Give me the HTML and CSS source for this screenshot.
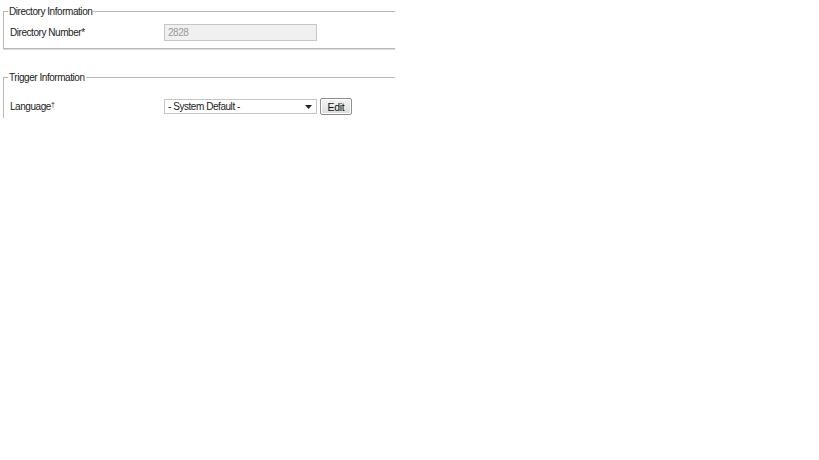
FILE: index.html
```html
<!DOCTYPE html>
<html>
<head>
<meta charset="utf-8">
<link rel="stylesheet" href="styles.css">
</head>
<body>
<div class="frame">
  <fieldset class="group group-dir">
    <legend>Directory Information</legend>
    <div class="row">
      <label class="lbl">Directory Number*</label>
      <input class="field field-disabled" type="text" value="2828" disabled>
    </div>
  </fieldset>
  <fieldset class="group group-trig">
    <legend>Trigger Information</legend>
    <div class="row">
      <label class="lbl">Language<sup class="mark">†</sup></label>
      <div class="select">
        <span class="select-text">- System Default -</span>
        <svg class="caret" width="7" height="4" viewBox="0 0 7 4"><path d="M0 0H7L3.5 4Z" fill="#222"/></svg>
      </div>
      <button class="btn" type="button">Edit</button>
    </div>
  </fieldset>
</div>
</body>
</html>
```
FILE: styles.css
```css
html, body {
  margin: 0;
  padding: 0;
  background: #fff;
}
body {
  font-family: "Liberation Sans", Arial, sans-serif;
  font-size: 10px;
  letter-spacing: -0.45px;
  color: #222;
}
.frame {
  width: 395px;
  height: 118px;
  overflow: hidden;
  padding-top: 5px;
  box-sizing: border-box;
}
.group {
  margin: 0 0 0 3px;
  width: 420px;
  padding: 0;
  border: 1px solid #b8b8b8;
  box-shadow: 0 1px 0 #dcdcdc;
}
.group legend {
  padding: 0 1px;
  margin-left: 4px;
  color: #222;
  font-size: 10px;
  line-height: 13px;
}
.group-dir {
  height: 44px;
  box-sizing: border-box;
}
.group-dir .row {
  margin-top: 6px;
}
.group-trig {
  margin-top: 22px;
  height: 80px;
}
.group-trig .row {
  margin-top: 14px;
}
.row {
  display: flex;
  align-items: center;
  height: 17px;
}
.lbl {
  width: 160px;
  padding-left: 6px;
  box-sizing: border-box;
}
.mark {
  font-size: 7px;
  vertical-align: top;
  line-height: 7px;
}
.field {
  width: 153px;
  height: 17px;
  box-sizing: border-box;
  margin: 0;
  padding: 0 0 0 3px;
  font: 10px "Liberation Sans", Arial, sans-serif;
  letter-spacing: -0.45px;
  border: 1px solid #c6c6c6;
}
.field-disabled {
  background: #f0f0f0;
  color: #9a9a9a;
}
.select {
  width: 153px;
  height: 15px;
  box-sizing: border-box;
  border: 1px solid #c6c6c6;
  background: #fff;
  display: flex;
  align-items: center;
  justify-content: space-between;
  padding: 0 4px 0 3px;
  color: #222;
}
.caret {
  display: block;
  margin-top: 1px;
}
.btn {
  margin: 0 0 0 3px;
  width: 32px;
  height: 17px;
  padding: 0;
  font: 10.5px "Liberation Sans", Arial, sans-serif;
  letter-spacing: -0.3px;
  color: #111;
  border: 1px solid #8e8e8e;
  border-radius: 2px;
  background: linear-gradient(#f4f4f4, #dcdcdc);
  box-shadow: inset 0 0 0 1px #fff;
}
```
